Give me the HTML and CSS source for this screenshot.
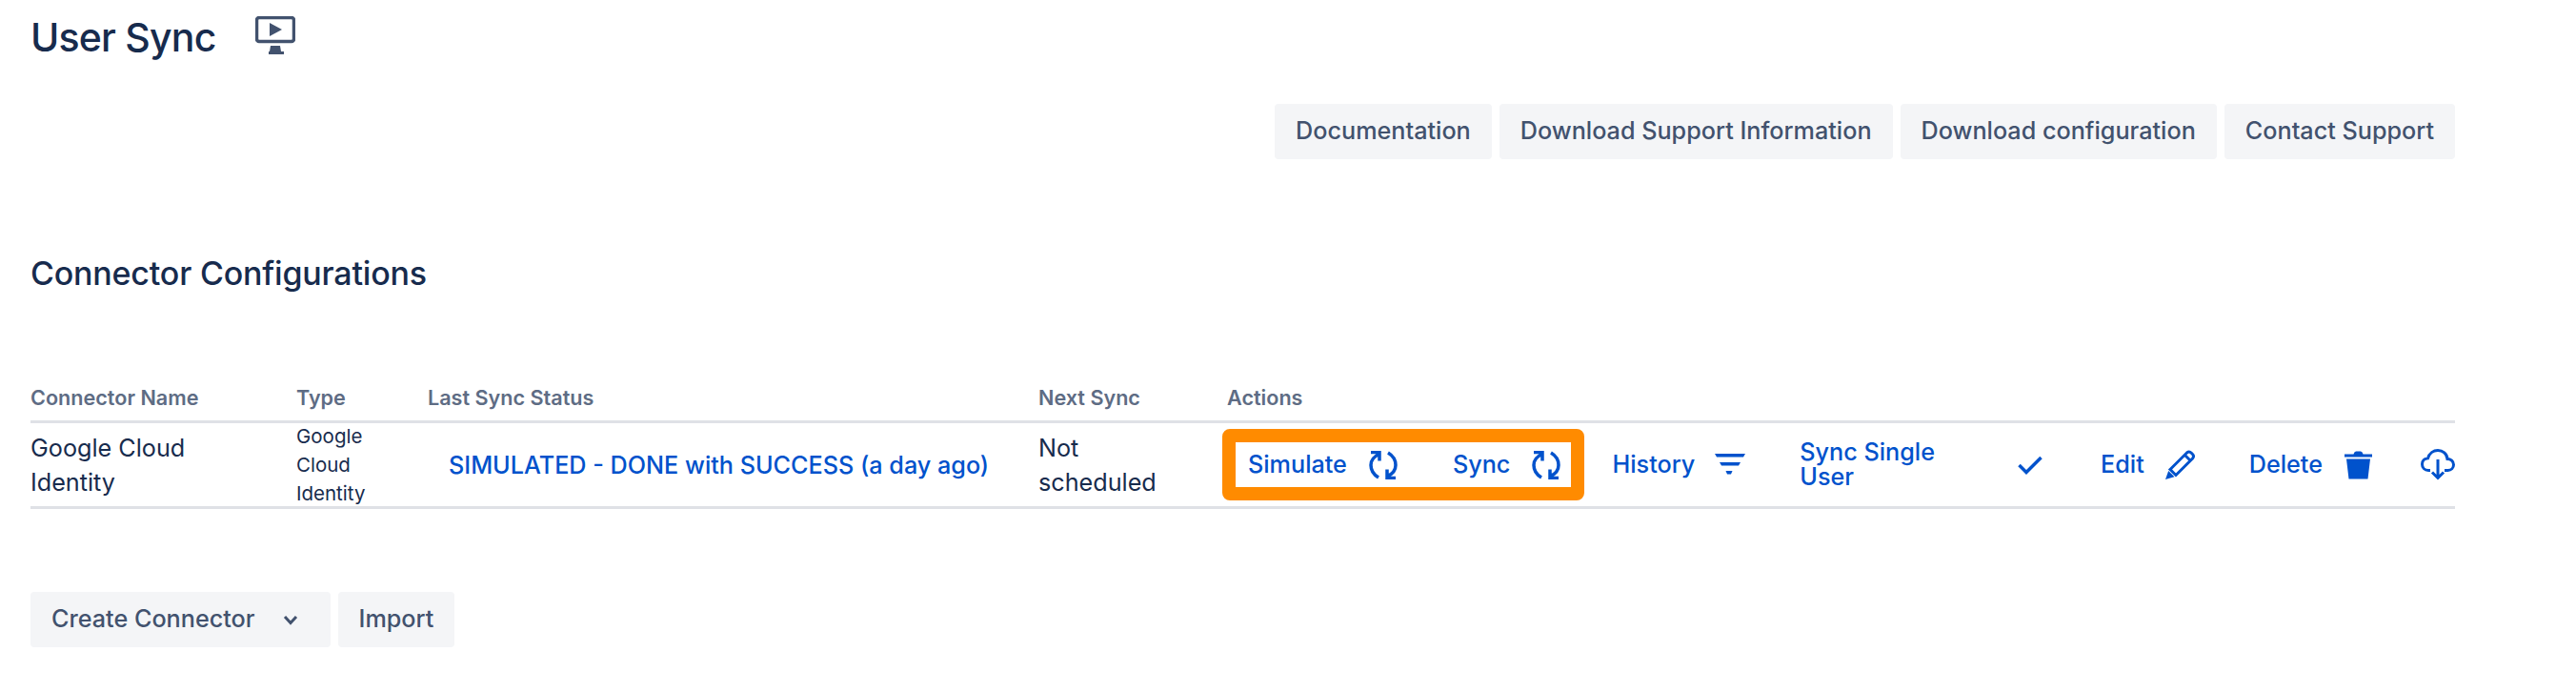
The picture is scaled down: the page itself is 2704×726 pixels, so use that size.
FILE: index.html
```html
<!DOCTYPE html>
<html lang="en">
<head>
<meta charset="utf-8">
<title>User Sync</title>
<link rel="stylesheet" href="styles.css">
</head>
<body>
<main class="page">
  <header class="title-row">
    <h1 class="title">User Sync</h1>
    <svg class="monitor" viewBox="0 0 42 40" aria-hidden="true">
      <rect x="1.5" y="1.5" width="39" height="25" rx="2.5" class="monitor-frame"/>
      <path d="M15 7 L28 14 L15 21 Z" class="monitor-fill"/>
      <path d="M16 31 H26 L27 37 H30 V40 H14 V37 H15 Z" class="monitor-fill"/>
    </svg>
  </header>

  <nav class="toolbar">
    <a class="btn">Documentation</a>
    <a class="btn">Download Support Information</a>
    <a class="btn">Download configuration</a>
    <a class="btn">Contact Support</a>
  </nav>

  <h2 class="section">Connector Configurations</h2>

  <table class="grid">
    <colgroup>
      <col class="c-name"><col class="c-type"><col class="c-status"><col class="c-next"><col>
    </colgroup>
    <thead>
      <tr><th>Connector Name</th><th>Type</th><th>Last Sync Status</th><th>Next Sync</th><th>Actions</th></tr>
    </thead>
    <tbody>
      <tr>
        <td>Google Cloud<br>Identity</td>
        <td class="small"><div class="small-inner">Google<br>Cloud<br>Identity</div></td>
        <td><a class="status">SIMULATED - DONE with SUCCESS (a day ago)</a></td>
        <td>Not<br>scheduled</td>
        <td>
          <div class="actions">
            <div class="highlight">
              <a class="action a-sim">Simulate
                <svg class="ico refresh" viewBox="0 0 30 30" aria-hidden="true"><path d="M10.5 3.5C5 6 2 10 2 15c0 5 3 10 8 13M2 1.5h9v9M19.5 26.5C25 24 28 20 28 15c0-5-3-10-8-13M28 28.5h-9v-9"/></svg>
              </a>
              <a class="action a-sync">Sync
                <svg class="ico refresh" viewBox="0 0 30 30" aria-hidden="true"><path d="M10.5 3.5C5 6 2 10 2 15c0 5 3 10 8 13M2 1.5h9v9M19.5 26.5C25 24 28 20 28 15c0-5-3-10-8-13M28 28.5h-9v-9"/></svg>
              </a>
            </div>
            <a class="action a-hist">History
              <svg class="ico filter" viewBox="0 0 32 22" aria-hidden="true"><path class="solid" d="M0 0H32L30 3.5H2ZM5 9H27L25 12.5H7ZM11.5 18H18.5L17 21.5H13Z"/></svg>
            </a>
            <a class="action a-single">Sync Single User
              <svg class="ico check" viewBox="0 0 26 20" aria-hidden="true"><path d="M1.5 10L9 17.5L24.5 2"/></svg>
            </a>
            <a class="action a-edit">Edit
              <svg class="ico pencil" viewBox="0 0 31 31" aria-hidden="true"><path d="M5 20.5L22.5 3Q25 1 27 3L28.5 4.5Q30.5 6.5 28.5 9L11 26.5ZM20.5 5.5L26 11"/><path class="solid" d="M3.2 22L9.500 28.300L0 31Z"/></svg>
            </a>
            <a class="action a-del">Delete
              <svg class="ico trash" viewBox="0 0 29 30" aria-hidden="true"><path class="solid" d="M0 3.5H9.5Q10 1 12 .5H17Q19 1 19.5 3.5H29V6.5H0ZM2 8.5H27L24.5 29.5H4.5Z"/></svg>
            </a>
            <a class="action a-cloud">
              <svg class="ico cloud" viewBox="0 0 36 33" aria-hidden="true"><path d="M10 22.5H8C4 22.5 1.5 19.5 1.5 16C1.5 12.5 4 10 7.500 9.800C9 4.500 13.500 1.500 18 1.500C23 1.500 27.500 5 28 10.500C31.500 10.500 34.500 13 34.500 16.500C34.500 20 32 22.500 28.500 22.500H25"/><path d="M18 11V30M12 24.500L18 30.500L24 24.500"/></svg>
            </a>
          </div>
        </td>
      </tr>
    </tbody>
  </table>

  <div class="footer-buttons">
    <a class="btn btn-create">Create Connector
      <svg class="chev" viewBox="0 0 16 11" aria-hidden="true"><path d="M2 2L8 8.5L14 2"/></svg>
    </a>
    <a class="btn">Import</a>
  </div>
</main>
</body>
</html>
```

FILE: styles.css
```css
* { box-sizing: border-box; }
html, body { margin: 0; background: #fff; }
body {
  font-family: Inter, "Liberation Sans", sans-serif;
  color: #172b4d;
  font-size: 25.2px;
}
.page { padding: 0 127px 0 32px; }

.title-row { display: flex; align-items: flex-start; height: 109px; }
.title { margin: 15px 0 0; font-size: 41px; line-height: 48px; font-weight: 500; letter-spacing: -0.8px; }
.monitor { width: 42px; height: 40px; margin: 17px 0 0 41px; }
.monitor-frame { fill: none; stroke: #42526e; stroke-width: 3.5; }
.monitor-fill { fill: #42526e; }

.toolbar { display: flex; justify-content: flex-end; gap: 8px; }
.btn {
  display: flex; align-items: center; height: 58px; padding: 0 22px;
  background: #f4f5f7; color: #42526e; border-radius: 4px;
  font-size: 25.2px; font-weight: 500; line-height: 1;
}

.section { margin: 100px 0 0; font-size: 34px; line-height: 40px; font-weight: 500; letter-spacing: -0.2px; }

.grid { width: 100%; margin-top: 98px; table-layout: fixed; border-collapse: collapse; }
.c-name { width: 279px; }
.c-type { width: 138px; }
.c-status { width: 641px; }
.c-next { width: 198px; }
.grid th {
  padding: 0 0 11px; text-align: left; height: 36px;
  font-size: 21.6px; line-height: 25px; font-weight: 600; color: #5e6c84;
  border-bottom: 3px solid #dfe1e6;
}
.grid td {
  padding: 0; height: 90px; vertical-align: middle; line-height: 36px;
  border-bottom: 3px solid #dfe1e6;
}
.grid .small { font-size: 20.5px; line-height: 30px; }
.small-inner { margin: -2px 0; }
.status { color: #0052cc; font-weight: 500; margin-left: 22px; }

.actions { display: flex; align-items: center; margin-left: -5px; color: #0052cc; }
.highlight {
  display: flex; align-items: center; width: 381px; height: 75px; padding-left: 13px;
  border: 14px solid #ff8b00; border-radius: 8px;
}
.action { display: flex; align-items: center; gap: 23px; font-weight: 500; line-height: 1; }
.a-sync { margin-left: 58px; }
.a-hist { margin-left: 29px; gap: 21px; }
.a-single { margin-left: 57px; gap: 24px; }
.a-edit { margin-left: 61px; gap: 22px; }
.a-del { margin-left: 57px; }
.a-cloud { margin-left: 51px; }

.ico { display: block; flex: none; fill: none; stroke: #0052cc; stroke-width: 3.5; }
.ico .solid { fill: #0052cc; stroke: none; }
.refresh { width: 30px; height: 30px; }
.filter { width: 32px; height: 22px; }
.check { width: 26px; height: 20px; }
.pencil { width: 31px; height: 31px; stroke-width: 3; }
.trash { width: 29px; height: 30px; }
.cloud { width: 36px; height: 33px; stroke-width: 3; }

.footer-buttons { display: flex; gap: 8px; margin-top: 87px; }
.btn-create { gap: 29px; padding-right: 34px; }
.chev { width: 16px; height: 11px; fill: none; stroke: #42526e; stroke-width: 3; }
```
